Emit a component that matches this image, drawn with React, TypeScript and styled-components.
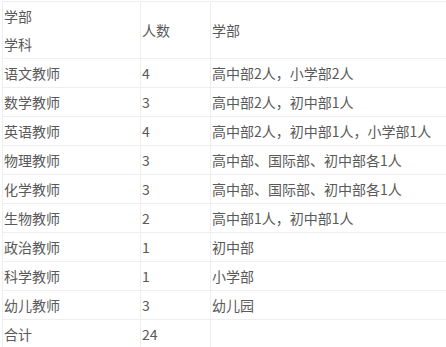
import React from 'react';
import styled, {createGlobalStyle} from 'styled-components';

const GlobalStyle = createGlobalStyle`
  body {
    margin: 0;
    background: #fff;
    overflow: hidden;
  }
`;

const rows = [
    {subject: '语文教师', count: '4', dept: '高中部2人，小学部2人'},
    {subject: '数学教师', count: '3', dept: '高中部2人，初中部1人'},
    {subject: '英语教师', count: '4', dept: '高中部2人，初中部1人，小学部1人'},
    {subject: '物理教师', count: '3', dept: '高中部、国际部、初中部各1人'},
    {subject: '化学教师', count: '3', dept: '高中部、国际部、初中部各1人'},
    {subject: '生物教师', count: '2', dept: '高中部1人，初中部1人'},
    {subject: '政治教师', count: '1', dept: '初中部'},
    {subject: '科学教师', count: '1', dept: '小学部'},
    {subject: '幼儿教师', count: '3', dept: '幼儿园'},
    {subject: '合计', count: '24', dept: ''},
];

const App = () => {
    return (
        <Wrap>
            <GlobalStyle/>
            <Table>
                <colgroup>
                    <col style={{width: 138}}/>
                    <col style={{width: 70}}/>
                    <col/>
                </colgroup>
                <tbody>
                <tr>
                    <Cell>
                        <Line>学部</Line>
                        <Line>学科</Line>
                    </Cell>
                    <Cell>人数</Cell>
                    <Cell>学部</Cell>
                </tr>
                {
                    rows.map((r) => (
                        <tr key={r.subject}>
                            <Cell>{r.subject}</Cell>
                            <Cell>{r.count}</Cell>
                            <Cell>{r.dept}</Cell>
                        </tr>
                    ))
                }
                </tbody>
            </Table>
        </Wrap>
    )
}

const Wrap = styled.div`
  width: 446px;
  height: 347px;
  overflow: hidden;
  padding-top: 1px;
  padding-left: 2px;
`;

const Table = styled.table`
  border-collapse: collapse;
  table-layout: fixed;
  width: 480px;
  font-family: "Noto Sans CJK SC", "Noto Sans", sans-serif;
  font-size: 14px;
  color: #595959;
`;

const Cell = styled.td`
  border: 1px solid #eee;
  padding: 0 1px;
  line-height: 28px;
  height: 28px;
  vertical-align: middle;
  white-space: nowrap;
`;

const Line = styled.div`
  line-height: 28px;
`;

export default App;
